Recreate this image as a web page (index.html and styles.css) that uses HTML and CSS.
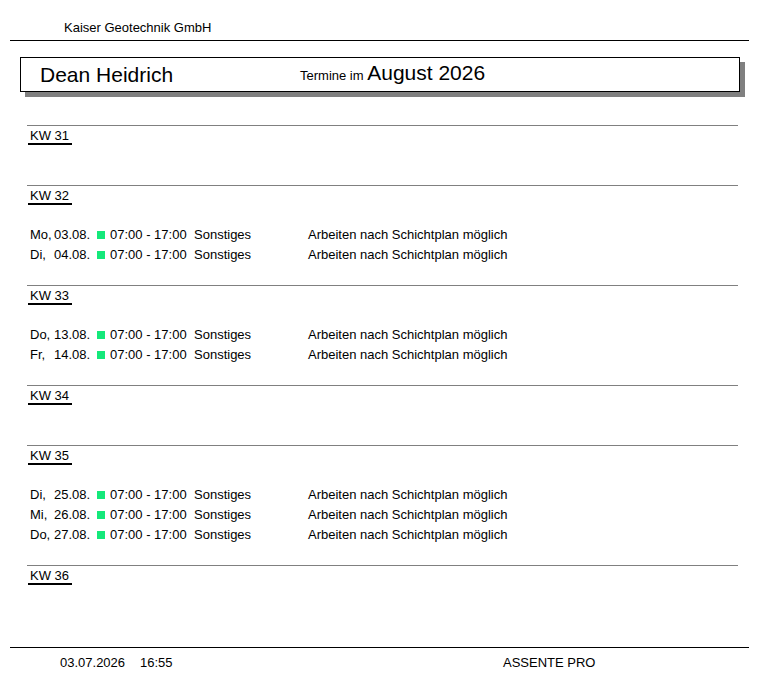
FILE: index.html
```html
<!DOCTYPE html>
<html lang="de">
<head>
<meta charset="utf-8">
<title>Termine August 2026</title>
<link rel="stylesheet" href="styles.css">
</head>
<body>
<div class="page">
  <header class="company">Kaiser Geotechnik GmbH</header>

  <div class="titlebox">
    <div class="person">Dean Heidrich</div>
    <div class="period"><span class="period-label">Termine im</span> <span class="period-month">August 2026</span></div>
  </div>

  <main class="weeks">
    <section class="week">
      <div class="kw">KW 31</div>
      <div class="entries"></div>
    </section>

    <section class="week">
      <div class="kw">KW 32</div>
      <div class="entries">
        <div class="entry"><span class="day">Mo,</span><span class="date">03.08.</span><span class="mark"></span><span class="time">07:00 - 17:00</span><span class="cat">Sonstiges</span><span class="desc">Arbeiten nach Schichtplan möglich</span></div>
        <div class="entry"><span class="day">Di,</span><span class="date">04.08.</span><span class="mark"></span><span class="time">07:00 - 17:00</span><span class="cat">Sonstiges</span><span class="desc">Arbeiten nach Schichtplan möglich</span></div>
      </div>
    </section>

    <section class="week">
      <div class="kw">KW 33</div>
      <div class="entries">
        <div class="entry"><span class="day">Do,</span><span class="date">13.08.</span><span class="mark"></span><span class="time">07:00 - 17:00</span><span class="cat">Sonstiges</span><span class="desc">Arbeiten nach Schichtplan möglich</span></div>
        <div class="entry"><span class="day">Fr,</span><span class="date">14.08.</span><span class="mark"></span><span class="time">07:00 - 17:00</span><span class="cat">Sonstiges</span><span class="desc">Arbeiten nach Schichtplan möglich</span></div>
      </div>
    </section>

    <section class="week">
      <div class="kw">KW 34</div>
      <div class="entries"></div>
    </section>

    <section class="week">
      <div class="kw">KW 35</div>
      <div class="entries">
        <div class="entry"><span class="day">Di,</span><span class="date">25.08.</span><span class="mark"></span><span class="time">07:00 - 17:00</span><span class="cat">Sonstiges</span><span class="desc">Arbeiten nach Schichtplan möglich</span></div>
        <div class="entry"><span class="day">Mi,</span><span class="date">26.08.</span><span class="mark"></span><span class="time">07:00 - 17:00</span><span class="cat">Sonstiges</span><span class="desc">Arbeiten nach Schichtplan möglich</span></div>
        <div class="entry"><span class="day">Do,</span><span class="date">27.08.</span><span class="mark"></span><span class="time">07:00 - 17:00</span><span class="cat">Sonstiges</span><span class="desc">Arbeiten nach Schichtplan möglich</span></div>
      </div>
    </section>

    <section class="week">
      <div class="kw">KW 36</div>
      <div class="entries"></div>
    </section>
  </main>

  <footer class="footer">
    <span class="f-date">03.07.2026</span>
    <span class="f-time">16:55</span>
    <span class="f-app">ASSENTE PRO</span>
  </footer>
</div>
</body>
</html>
```

FILE: styles.css
```css
html, body {
  margin: 0;
  padding: 0;
  background: #ffffff;
}

body {
  font-family: "Liberation Sans", Arial, sans-serif;
  color: #000000;
  font-size: 13px;
}

.page {
  width: 780px;
  height: 687px;
  overflow: hidden;
}

.company {
  margin: 0 31px 0 10px;
  height: 41px;
  box-sizing: border-box;
  padding: 21px 0 0 54px;
  line-height: 14px;
  font-size: 13px;
  border-bottom: 1px solid #000000;
}

.titlebox {
  margin: 16px 0 0 20px;
  width: 720px;
  height: 35px;
  box-sizing: border-box;
  border: 1px solid #000000;
  box-shadow: 5px 5px 0 #808080;
  display: flex;
  align-items: center;
  padding-left: 19px;
}

.person {
  width: 260px;
  font-size: 21px;
  line-height: 24px;
}

.period {
  font-size: 13px;
  line-height: 24px;
}

.period-month {
  font-size: 21px;
}

.weeks {
  margin-top: 33px;
}

.week {
  margin-left: 27px;
  width: 711px;
  border-top: 1px solid #808080;
  padding-bottom: 20px;
}

.kw {
  margin-left: 1px;
  width: 44px;
  box-sizing: border-box;
  padding: 2px 0 0 2px;
  line-height: 15px;
  border-bottom: 2px solid #000000;
}

.entries {
  padding-top: 20px;
  padding-left: 3px;
}

.entry {
  display: flex;
  align-items: center;
  height: 20px;
  line-height: 20px;
  white-space: nowrap;
}

.day {
  width: 24px;
  flex: none;
}

.date {
  width: 43px;
  flex: none;
}

.mark {
  flex: none;
  width: 8px;
  height: 8px;
  margin: 0 5px 1px 0;
  background: #14e87a;
}

.time {
  width: 84px;
  flex: none;
}

.cat {
  width: 114px;
  flex: none;
}

.footer {
  margin: 22px 31px 0 10px;
  border-top: 1px solid #000000;
  padding: 8px 0 0 50px;
  line-height: 14px;
  display: flex;
}

.f-date {
  width: 80px;
}

.f-time {
  width: 363px;
}
```
